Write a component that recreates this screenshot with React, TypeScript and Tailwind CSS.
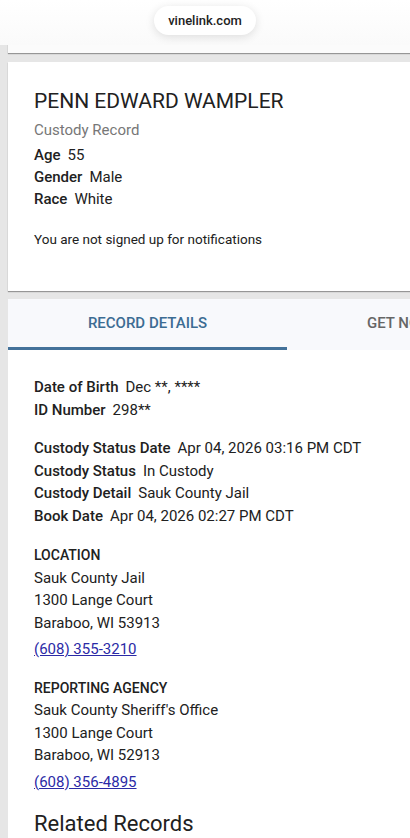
import React from "react";

const Row = ({ label, value }: { label: string; value: string }) => (
  <div className="leading-[22.5px]">
    <span className="font-medium">{label}</span>
    <span className="ml-[7px]">{value}</span>
  </div>
);

export default function App() {
  return (
    <div
      className="relative min-h-[838px] bg-[#e6e6e6] pl-[8px] text-[#212121]"
      style={{ fontFamily: "Roboto, 'Noto Sans', sans-serif" }}
    >
      <div className="absolute left-0 top-0 z-10 flex h-[45px] w-full items-start justify-center bg-gradient-to-b from-white to-[#fafafa]">
        <div className="mt-[6px] flex h-[29px] w-[102px] items-center justify-center rounded-full bg-white text-[13px] font-medium text-[#222] shadow-[0_2px_10px_rgba(0,0,0,0.12)]">
          vinelink.com
        </div>
      </div>

      <div className="h-[53px] bg-[#fbfbfb] shadow-[0_1px_1px_rgba(0,0,0,0.35)]" />

      <div className="mt-[9px] bg-white pl-[26px] pt-[25px] pb-[42px] shadow-[0_1px_1px_rgba(0,0,0,0.35)]">
        <div className="text-[21px] leading-[28px]">PENN EDWARD WAMPLER</div>
        <div className="mt-[4px] text-[15px] leading-[22px] text-[#777]">Custody Record</div>
        <div className="mt-[3px] text-[15px]">
          <div className="leading-[22px]"><span className="font-medium">Age</span><span className="ml-[7px]">55</span></div>
          <div className="leading-[22px]"><span className="font-medium">Gender</span><span className="ml-[7px]">Male</span></div>
          <div className="leading-[22px]"><span className="font-medium">Race</span><span className="ml-[7px]">White</span></div>
        </div>
        <div className="mt-[19px] text-[13.5px] leading-[20px]">You are not signed up for notifications</div>
      </div>

      <div className="mt-[8px] bg-white">
        <div className="flex h-[51px] overflow-hidden bg-[#f8f9fc]">
          <div className="flex w-[279px] shrink-0 flex-col">
            <div className="flex flex-1 items-center justify-center text-[15px] font-medium text-[#3c6c93]">
              RECORD DETAILS
            </div>
            <div className="h-[3px] bg-[#44729a]" />
          </div>
          <div className="flex shrink-0 items-center whitespace-nowrap pl-[80px] pb-[3px] text-[15px] font-medium text-[#666]">
            GET NOTIFIED
          </div>
        </div>

        <div className="pl-[26px] pt-[26px] text-[15px]">
          <Row label="Date of Birth" value="Dec **, ****" />
          <Row label="ID Number" value="298**" />

          <div className="mt-[16px]">
            <Row label="Custody Status Date" value="Apr 04, 2026 03:16 PM CDT" />
            <Row label="Custody Status" value="In Custody" />
            <Row label="Custody Detail" value="Sauk County Jail" />
            <Row label="Book Date" value="Apr 04, 2026 02:27 PM CDT" />
          </div>

          <div className="mt-[17px]">
            <div className="text-[14px] font-medium leading-[22.5px]">LOCATION</div>
            <div className="leading-[22.5px]">Sauk County Jail</div>
            <div className="leading-[22.5px]">1300 Lange Court</div>
            <div className="leading-[22.5px]">Baraboo, WI 53913</div>
            <a href="#" className="mt-[4px] block leading-[22.5px] text-[#2b2aa6] underline">(608) 355-3210</a>
          </div>

          <div className="mt-[16px]">
            <div className="text-[14px] font-medium leading-[22.5px]">REPORTING AGENCY</div>
            <div className="leading-[22.5px]">Sauk County Sheriff's Office</div>
            <div className="leading-[22.5px]">1300 Lange Court</div>
            <div className="leading-[22.5px]">Baraboo, WI 52913</div>
            <a href="#" className="mt-[4px] block leading-[22.5px] text-[#2b2aa6] underline">(608) 356-4895</a>
          </div>

          <div className="mt-[16px] text-[22px] leading-[30px]">Related Records</div>
        </div>
      </div>
    </div>
  );
}
